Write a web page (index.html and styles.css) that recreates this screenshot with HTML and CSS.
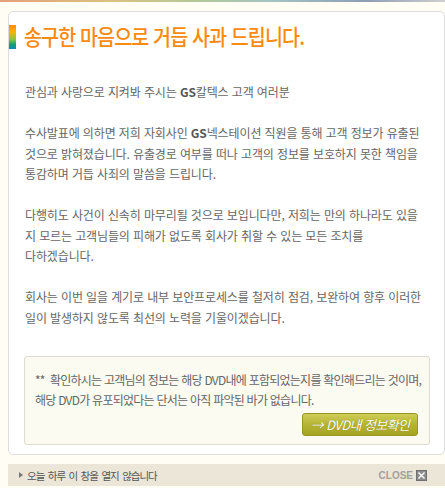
FILE: index.html
```html
<!DOCTYPE html>
<html lang="ko">
<head>
<meta charset="utf-8">
<title>사과문</title>
<link rel="stylesheet" href="styles.css">
</head>
<body>
<div class="topbar"></div>
<div class="wrap">
  <div class="card">
    <h1 class="title"><span class="accent"></span><span class="title-text">송구한 마음으로 거듭 사과 드립니다.</span></h1>
    <div class="content">
      <p>관심과 사랑으로 지켜봐 주시는 <b>GS</b>칼텍스 고객 여러분</p>
      <p>수사발표에 의하면 저희 자회사인 <b>GS</b>넥스테이션 직원을 통해 고객 정보가 유출된<br>것으로 밝혀졌습니다. 유출경로 여부를 떠나 고객의 정보를 보호하지 못한 책임을<br>통감하며 거듭 사죄의 말씀을 드립니다.</p>
      <p>다행히도 사건이 신속히 마무리될 것으로 보입니다만, 저희는 만의 하나라도 있을<br>지 모르는 고객님들의 피해가 없도록 회사가 취할 수 있는 모든 조치를<br>다하겠습니다.</p>
      <p>회사는 이번 일을 계기로 내부 보안프로세스를 철저히 점검, 보완하여 향후 이러한<br>일이 발생하지 않도록 최선의 노력을 기울이겠습니다.</p>
    </div>
    <div class="notice">
      <p class="notice-text">**&nbsp; 확인하시는 고객님의 정보는 해당 DVD내에 포함되었는지를 확인해드리는 것이며,<br>해당 DVD가 유포되었다는 단서는 아직 파악된 바가 없습니다.</p>
      <div class="notice-actions"><a class="btn" href="#">→ DVD내 정보확인</a></div>
    </div>
  </div>
  <div class="footer">
    <span class="footer-left"><span class="tri"></span>오늘 하루 이 창을 열지 않습니다</span>
    <span class="footer-close">CLOSE <span class="xbox"><svg width="11" height="11" viewBox="0 0 11 11"><rect x="0" y="0" width="11" height="11" fill="#8c8c8c"/><rect x="0.5" y="0.5" width="10" height="10" fill="none" stroke="#6f6f6f"/><path d="M2.5 2.5 L8.5 8.5 M8.5 2.5 L2.5 8.5" stroke="#fff" stroke-width="1.4"/></svg></span></span>
  </div>
</div>
</body>
</html>
```

FILE: styles.css
```css
html, body {
  margin: 0;
  padding: 0;
  background: #fffdf4;
  font-family: "Noto Sans CJK KR", "Noto Sans", sans-serif;
}
.topbar {
  height: 2px;
  background: linear-gradient(to right, #e7a07c 0%, #d8c17f 25%, #b2c89b 45%, #a2c3c2 62%, #8c9db6 82%, #cfcfcf 100%);
}
.wrap {
  padding: 9px 0 0 8px;
}
.card {
  background: #fff;
  border: 1px solid #dcdcdc;
  border-radius: 5px;
  padding: 13px 14px 9px 0;
}
.title {
  display: flex;
  align-items: center;
  margin: 0;
  height: 24px;
}
.accent {
  width: 7px;
  height: 24px;
  background: linear-gradient(to bottom, #ff8a00 0%, #f7b500 30%, #8cc63f 60%, #1aa06a 80%, #0f88b8 100%);
}
.title-text {
  margin-left: 8px;
  margin-top: -4px;
  font-size: 22px;
  font-weight: 500;
  color: #fb8a10;
  letter-spacing: -1px;
  transform: scaleX(0.89);
  transform-origin: left center;
  white-space: nowrap;
}
.content {
  padding: 33px 0 0 16px;
  font-size: 12px;
  line-height: 20.5px;
  color: #666;
  letter-spacing: -0.12px;
  white-space: nowrap;
}
.content p {
  margin: 0 0 20.5px;
}
.content b {
  color: #555;
}
.notice {
  margin: 28px 0 0 15px;
  background: #fbfbf1;
  border: 1px solid #dcdcd2;
  border-radius: 3px;
  padding: 13px 11px 8px 10px;
}
.notice-text {
  margin: 0;
  font-size: 12px;
  line-height: 20px;
  color: #666;
  letter-spacing: -0.75px;
  white-space: nowrap;
}
.notice-actions {
  display: flex;
  justify-content: flex-end;
  margin-top: 3px;
}
.btn {
  display: block;
  width: 116px;
  height: 23px;
  box-sizing: border-box;
  border: 1px solid #98981e;
  border-radius: 3px;
  background: linear-gradient(to bottom, #cfcc5a 0%, #b6b432 50%, #a4a424 100%);
  color: #fff;
  font-style: italic;
  font-size: 13px;
  line-height: 21px;
  text-align: center;
  text-decoration: none;
  letter-spacing: -0.6px;
  text-shadow: 0 0 1px rgba(90, 90, 0, 0.6);
}
.footer {
  margin-top: 9px;
  height: 22px;
  background: #ece6d9;
  display: flex;
  align-items: center;
  justify-content: space-between;
  padding: 0 18px 0 11px;
  font-size: 10.5px;
  color: #555;
  letter-spacing: -1px;
  word-spacing: 1.5px;
}
.footer-left {
  display: flex;
  align-items: center;
}
.tri {
  width: 0;
  height: 0;
  border-top: 3px solid transparent;
  border-bottom: 3px solid transparent;
  border-left: 4px solid #777;
  margin-right: 4px;
}
.footer-close {
  display: flex;
  align-items: center;
  font-weight: bold;
  font-size: 10px;
  color: #a0a0a0;
  font-family: "Liberation Sans", "Noto Sans", sans-serif;
  letter-spacing: 0;
  word-spacing: 0;
}
.xbox {
  display: flex;
  margin-left: 3px;
}
```
